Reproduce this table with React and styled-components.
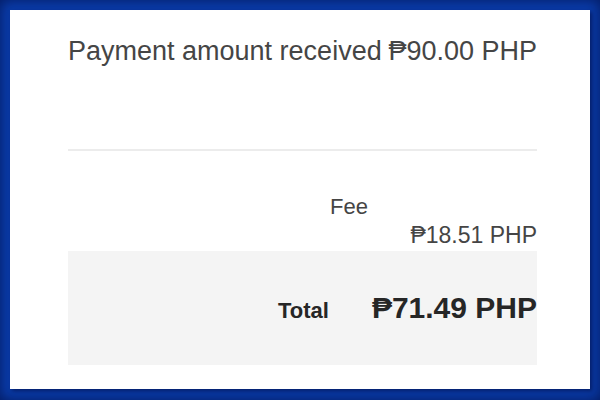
import React from 'react';
import styled, { createGlobalStyle } from 'styled-components';

const GlobalStyle = createGlobalStyle`
  html, body {
    margin: 0;
    padding: 0;
    width: 600px;
    height: 400px;
    overflow: hidden;
  }
  body {
    font-family: "Liberation Sans", Arial, "DejaVu Sans", sans-serif;
  }
`;

const Frame = styled.div`
  box-sizing: border-box;
  width: 600px;
  height: 400px;
  padding: 10px 10px 11px 10px;
  background: #0a3dac;
  box-shadow: inset 0 0 14px rgba(0, 10, 60, 0.7);
`;

const Card = styled.div`
  box-sizing: border-box;
  height: 100%;
  background: #ffffff;
  padding: 26px 53px 0 58px;
  box-shadow: 2px 2px 4px rgba(0, 0, 40, 0.5);
  display: flex;
  flex-direction: column;
`;

const ReceivedRow = styled.div`
  display: flex;
  justify-content: space-between;
  font-size: 27px;
  line-height: 31px;
  color: #454545;
  white-space: nowrap;
`;

const Divider = styled.hr`
  border: 0;
  height: 2px;
  background: #ececec;
  margin: 82px 0 0 0;
`;

const FeeBlock = styled.div`
  display: flex;
  flex-direction: column;
  align-items: flex-end;
  margin-top: 43px;
  color: #454545;
`;

const FeeLabel = styled.div`
  font-size: 22px;
  line-height: 25px;
  margin-right: 169px;
`;

const FeeValue = styled.div`
  font-size: 23px;
  line-height: 26px;
  margin-top: 3px;
`;

const TotalBox = styled.div`
  box-sizing: border-box;
  margin-top: 3px;
  height: 114px;
  padding-top: 40px;
  background: #f4f4f4;
  display: flex;
  justify-content: flex-end;
  align-items: baseline;
  gap: 43px;
  color: #262626;
  font-weight: bold;
`;

const TotalLabel = styled.span`
  font-size: 22px;
`;

const TotalValue = styled.span`
  font-size: 30px;
`;

export default function App() {
  return (
    <>
      <GlobalStyle />
      <Frame>
        <Card>
          <ReceivedRow>
            <span>Payment amount received</span>
            <span>₱90.00 PHP</span>
          </ReceivedRow>
          <Divider />
          <FeeBlock>
            <FeeLabel>Fee</FeeLabel>
            <FeeValue>₱18.51 PHP</FeeValue>
          </FeeBlock>
          <TotalBox>
            <TotalLabel>Total</TotalLabel>
            <TotalValue>₱71.49 PHP</TotalValue>
          </TotalBox>
        </Card>
      </Frame>
    </>
  );
}
